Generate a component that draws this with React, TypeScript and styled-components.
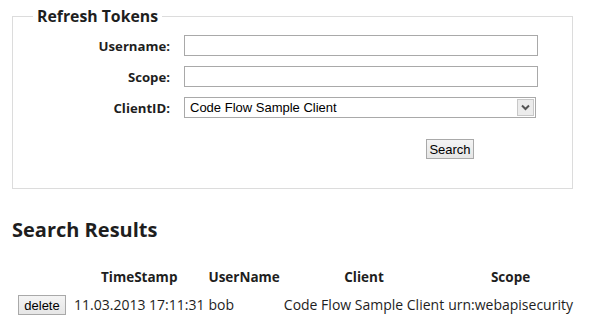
import styled, { createGlobalStyle } from "styled-components";

const GlobalStyle = createGlobalStyle`
  html, body {
    margin: 0;
    padding: 0;
    background: #fff;
  }
  body {
    font-family: "Open Sans", "Noto Sans", sans-serif;
    color: #1e1e1e;
  }
`;

const Page = styled.div`
  width: 592px;
  padding: 0 19px 0 12px;
  box-sizing: border-box;
`;

const Fieldset = styled.fieldset`
  margin: 6px 0 0 0;
  padding: 0 0 29px 0;
  border: 1px solid #dcdcdc;
  min-width: 0;
`;

const Legend = styled.legend`
  margin-left: 20px;
  padding: 0 4px;
  font-size: 15.8px;
  font-weight: 700;
  line-height: 20px;
  color: #1e1e1e;
`;

const Form = styled.div`
  display: grid;
  grid-template-columns: 157px 354px;
  column-gap: 14px;
  row-gap: 10px;
  padding-top: 9px;
  align-items: center;
`;

const Label = styled.label`
  text-align: right;
  font-size: 13.2px;
  font-weight: 700;
`;

const TextInput = styled.input`
  box-sizing: border-box;
  height: 21px;
  width: 354px;
  border: 1px solid #a9a9a9;
  padding: 1px 5px;
  font-family: "Liberation Sans", Arial, sans-serif;
  font-size: 13px;
  outline: none;
`;

const SelectBox = styled.div`
  box-sizing: border-box;
  display: flex;
  width: 352px;
  height: 21px;
  border: 1px solid #a9a9a9;
  background: #fff;
`;

const Select = styled.select`
  flex: 1;
  appearance: none;
  border: none;
  background: transparent;
  padding: 0 0 0 5px;
  font-family: "Liberation Sans", Arial, sans-serif;
  font-size: 13px;
  color: #000;
  outline: none;
`;

const ArrowBox = styled.div`
  width: 17px;
  margin: 1px;
  box-sizing: border-box;
  border: 1px solid #c8c8c8;
  background: #ececec;
  display: flex;
  align-items: center;
  justify-content: center;
`;

const ButtonRow = styled.div`
  display: flex;
  justify-content: flex-end;
  width: 461px;
  margin-top: 21px;
`;

const Button = styled.button<{ $w: number }>`
  box-sizing: border-box;
  width: ${(p) => p.$w}px;
  height: 20px;
  padding: 0;
  border: 1px solid #a9a9a9;
  border-radius: 0;
  background: linear-gradient(#f4f4f4, #e6e6e6);
  font-family: "Liberation Sans", Arial, sans-serif;
  font-size: 13px;
  color: #000;
`;

const Heading = styled.h2`
  margin: 27px 0 0 0;
  font-size: 20px;
  font-weight: 700;
  line-height: 28px;
  color: #1e1e1e;
`;

const Table = styled.table`
  margin: 21px 0 0 3px;
  border-spacing: 2px;
  font-size: 14px;
`;

const Th = styled.th`
  padding: 1px 1px 6px 1px;
  text-align: center;
  font-size: 13.5px;
  font-weight: 700;
  line-height: 18px;
`;

const Td = styled.td`
  padding: 1px;
  text-align: left;
  white-space: nowrap;
  line-height: 18px;
`;

const DeleteCell = styled(Td)`
  padding-right: 5px;
`;

const rows = [
  {
    time: "11.03.2013 17:11:31",
    user: "bob",
    client: "Code Flow Sample Client",
    scope: "urn:webapisecurity",
  },
];

export default function App() {
  return (
    <Page>
      <GlobalStyle />
      <Fieldset>
        <Legend>Refresh Tokens</Legend>
        <Form>
          <Label htmlFor="username">Username:</Label>
          <TextInput id="username" type="text" />
          <Label htmlFor="scope">Scope:</Label>
          <TextInput id="scope" type="text" />
          <Label htmlFor="client">ClientID:</Label>
          <SelectBox>
            <Select id="client" defaultValue="codeflow">
              <option value="codeflow">Code Flow Sample Client</option>
            </Select>
            <ArrowBox>
              <svg width="9" height="7" viewBox="0 0 9 7">
                <path d="M1 1.5 L4.5 5 L8 1.5" stroke="#555" strokeWidth="2" fill="none" />
              </svg>
            </ArrowBox>
          </SelectBox>
        </Form>
        <ButtonRow>
          <Button $w={48} type="button">Search</Button>
        </ButtonRow>
      </Fieldset>

      <Heading>Search Results</Heading>
      <Table>
        <thead>
          <tr>
            <Th></Th>
            <Th>TimeStamp</Th>
            <Th>UserName</Th>
            <Th>Client</Th>
            <Th>Scope</Th>
          </tr>
        </thead>
        <tbody>
          {rows.map((r) => (
            <tr key={r.time}>
              <DeleteCell>
                <Button $w={48} type="button">delete</Button>
              </DeleteCell>
              <Td>{r.time}</Td>
              <Td>{r.user}</Td>
              <Td>{r.client}</Td>
              <Td>{r.scope}</Td>
            </tr>
          ))}
        </tbody>
      </Table>
    </Page>
  );
}
